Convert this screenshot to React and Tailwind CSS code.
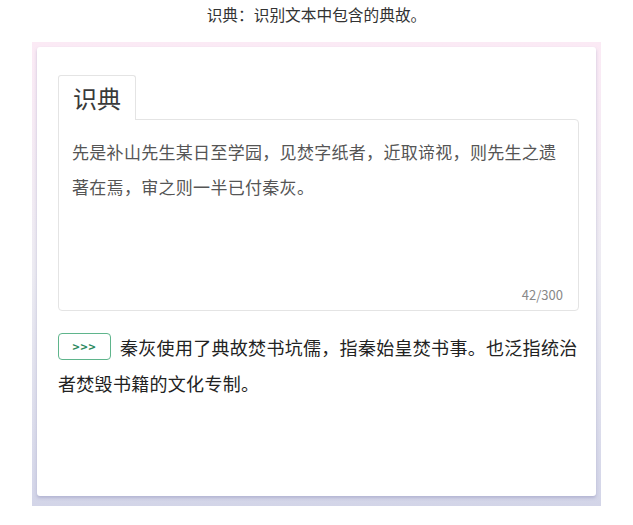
import React from "react";

const cjk = { fontFamily: '"Noto Sans CJK SC", "Noto Sans", sans-serif' };

const App = () => {
  const text =
    "先是补山先生某日至学园，见焚字纸者，近取谛视，则先生之遗著在焉，审之则一半已付秦灰。";

  return (
    <div className="w-[633px] h-[525px] bg-white" style={cjk}>
      <div className="h-[42px] pt-[3px] text-center text-[15.7px] text-[#333]">
        识典：识别文本中包含的典故。
      </div>
      <div className="mx-[32px] pt-[5px] px-[5px] pb-[10px] bg-gradient-to-b from-[#fbeaf5] via-[#ecebf2] to-[#d3d5e8]">
        <div className="bg-white rounded-[3px] shadow-[0_2px_3px_rgba(150,150,190,0.5)] h-[449px] pl-[21px] pr-[17px] pt-[28px]">
          {/* tab */}
          <div className="flex">
            <div className="w-[78px] h-[45px] border border-b-0 border-[#e4e4e4] rounded-t-[3px] text-[24px] text-[#3a3a3a] pl-[14px] leading-[44px] -mb-px bg-white relative z-10">
              识典
            </div>
          </div>
          <div className="border border-[#e4e4e4] rounded-b-[4px] rounded-tr-[4px] h-[192px] relative pl-[13px] pr-[13px] pt-[14px]">
            <p className="text-[17px] tracking-[0.3px] leading-[35px] text-[#555]">{text}</p>
            <span className="absolute right-[15px] bottom-[6px] text-[13px] text-[#888]">
              42/300
            </span>
          </div>
          <div className="mt-[18px] text-[18px] tracking-[0.3px] leading-[36px] text-[#222]">
            <span className="inline-block w-[53px] h-[27px] border border-[#5fb58c] rounded-[4px] text-center text-[12px] leading-[25px] tracking-[1px] font-bold text-[#2e8b5e] align-[3px] mr-[9px]">
              &gt;&gt;&gt;
            </span>
            秦灰使用了典故焚书坑儒，指秦始皇焚书事。也泛指统治者焚毁书籍的文化专制。
          </div>
        </div>
      </div>
    </div>
  );
};

export default App;
